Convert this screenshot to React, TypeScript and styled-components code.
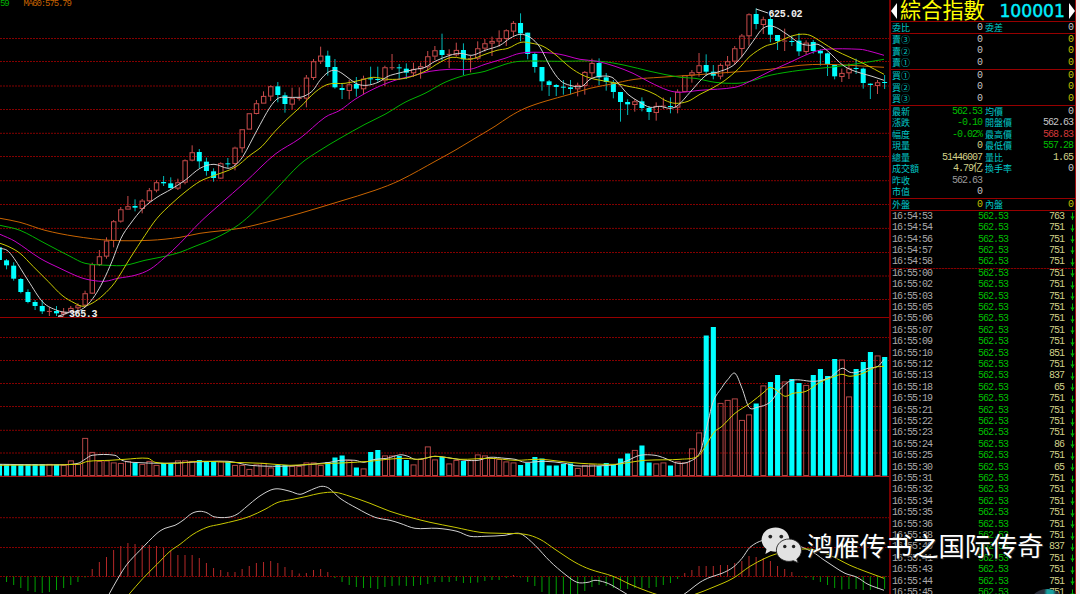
import React from "react";
import styled, { createGlobalStyle, css } from "styled-components";

/* ---------- data ---------- */

const FIRST_X = -0.6;
const STEP = 7.139;
const barX = (i: number) => FIRST_X + STEP * i;

// direction, high, body top, body bottom, low - vertical positions in thirds of a pixel
const CANDLES = `c742,742,780,780 c777,781,796,808 c787,797,836,842 c834,837,876,880 c868,876,906,910
c900,906,918,930 c900,918,934,942 r922,933,935,948 c918,933,940,948 r924,936,942,950
r918,924,934,940 r910,916,924,940 r872,880,916,922 r788,793,880,882 r750,769,794,798
r712,722,769,776 r660,664,722,742 r621,628,664,668 r588,619,628,628 c598,618,623,634
r597,602,626,640 r564,571,603,608 r541,547,571,577 c528,546,550,558 c532,550,564,566
r536,547,565,570 r478,481,547,553 r436,457,481,484 c447,456,484,504 c473,485,513,527
c505,514,534,545 r487,490,535,537 c474,490,493,503 r440,443,491,511 r388,388,444,458
r340,340,388,388 r300,310,341,343 r274,288,310,310 r256,259,289,303 c246,259,285,307
c277,286,312,338 r263,295,313,328 r262,294,297,302 r225,233,295,322 r177,184,233,240
r140,167,184,192 c152,167,201,227 c177,201,262,266 c252,264,270,297 r240,253,272,298
c231,252,266,290 r227,236,267,283 c200,235,237,252 c200,237,239,245 r197,202,241,258
r162,202,204,210 c192,202,205,240 c190,206,218,237 r188,207,219,231 r188,199,207,236
r153,169,201,213 r138,151,169,180 c101,150,165,182 r148,162,166,204 r128,150,165,170
c130,150,178,225 r168,175,178,217 r124,145,175,180 r117,130,145,155 r110,123,130,168
r91,115,124,140 r88,91,116,138 r63,69,94,108 c40,69,100,124 c98,98,162,178
c157,162,201,218 c201,201,244,272 c240,244,255,288 c252,255,261,288 c240,260,262,284
c240,262,267,283 r248,255,267,289 r213,216,257,284 r176,189,219,236 c175,189,232,256
c219,232,246,272 c240,247,276,295 c276,276,306,365 c298,306,313,345 r298,304,314,335
c292,304,324,334 c318,324,336,360 r307,318,338,362 r293,317,320,327 c292,318,321,340
r268,275,322,340 r226,226,275,276 r210,217,226,248 r159,196,218,230 c163,195,215,228
c195,215,227,238 r190,195,229,238 r168,184,196,220 r138,145,184,195 r102,107,146,172
r40,43,108,137 c25,42,72,88 r50,58,74,102 c48,57,104,127 c105,105,123,150
r86,122,125,153 c107,123,125,138 c99,122,154,168 r121,128,155,164 c120,126,153,161
c148,152,160,197 c158,160,192,228 c195,195,229,238 r206,219,230,246 r190,205,219,237
c176,204,206,222 c203,206,249,266 c250,251,255,297 r240,247,257,282 c225,246,248,267`
  .split(/\s+/)
  .map((s) => {
    const [high, top, bottom, low] = s.slice(1).split(",").map((n) => Number(n) / 3);
    return { up: s[0] === "r", high, top, bottom, low };
  });

const VOLUME_BASE = 475.7;
const VOLUMES = [
  464, 464, 464, 464, 464, 464, 464, 464, 464.5, 465, 460.5, 464, 438, 452, 461, 460.5, 462.5, 463, 461, 463,
  464, 461, 465, 463, 463, 460.5, 460.5, 461, 460, 461, 461, 461.5, 461.5, 465, 465, 469, 464.5, 463, 467.5, 465,
  465, 466, 466, 462.5, 462.5, 465, 462, 457.5, 455.5, 460, 467.5, 468.5, 452, 450, 455.5, 455.5, 456, 460, 464.5, 459,
  446.5, 459.5, 457, 463.5, 460, 461, 460, 454.5, 455.5, 458, 459, 461.5, 462.5, 465, 463, 457, 458.5, 465.5, 465.5, 464,
  463.5, 468, 465, 464.5, 466, 463, 465, 458.5, 453.5, 450, 445.5, 462.5, 463.5, 462.5, 465.5, 461.5, 462.5, 448.5, 432.5, 335.5,
  327, 403, 400, 398.5, 420, 414.5, 403.5, 385.5, 382, 375, 381.5, 379, 383, 385, 375, 369, 376, 359, 359.5, 396.5,
  369, 362, 352, 355.5, 357,
];

const ZERO_Y = 576.5;
const HISTOGRAM = [
  576.5, 582, 585, 588, 591, 592, 593, 592, 590, 588, 585, 582, 577.5, 569, 562, 557, 550, 546, 543, 544,
  545, 545, 546, 547.5, 551, 555, 555, 555, 558, 563, 568, 570, 572, 572, 569, 566, 563, 562, 561, 563,
  567, 570, 573.5, 573, 570, 569, 572, 578, 582, 585, 587, 588, 588, 589, 587, 586, 585.5, 586, 586, 585,
  584, 582, 582, 582, 581, 583, 583, 582.5, 581, 580, 580, 578, 575, 577.5, 582, 586, 592, 594, 594, 594,
  594, 594, 591, 587, 585, 586, 588, 589, 589, 588, 588, 588, 587, 585, 583, 579, 573, 570, 566, 566,
  566, 565, 565, 563, 561, 556, 557, 558, 561, 566, 569, 572, 577, 578, 580, 582, 585, 588, 589.5, 589,
  589, 590, 590, 589, 589,
];

const PRICE_LINES = [
  {
    color: "#c86400",
    points:
      "0,218 20,222 45,230 75,236 110,240 150,240 180,237 200,233 240,228 270,221 300,213 340,201 375,190 400,180 437,160 455,150 475,138 495,126 510,116 525,108 545,101 570,94 590,88 610,84 635,79 660,77 690,75 730,72 770,69 800,65 825,64 850,65 884,67",
  },
  {
    color: "#00b400",
    points:
      "0,225 20,230 45,243 70,256 85,263 108,265 125,265 145,260 165,256 180,252 195,246 215,238 235,227 250,215 275,190 300,164 320,150 340,138 365,124 385,114 405,102 425,93 445,82 465,75 485,71 505,64 520,61 560,61 600,61 625,65 650,71 680,77 695,78 715,82 737,83 750,81 770,75 800,70 830,67 860,63 884,59",
  },
  {
    color: "#c800c8",
    points:
      "0,234 15,241 40,258 60,268 80,277 92,280 105,281 118,278 135,275 150,269 165,257 180,243 200,222 220,204 245,182 275,154 300,138 325,117 340,110 355,99 375,88 395,80 415,75 430,71 450,69 470,69 485,64 505,58 520,53 540,52 560,54 580,59 597,61 615,66 633,73 650,82 668,90 680,92 700,90 735,87 750,81 770,71 790,62 810,53 825,49 860,49 870,51 884,55",
  },
  {
    color: "#c8c800",
    points:
      "0,243 8,246 20,253 33,266 48,281 62,295 75,303 83,306 92,303 103,295 115,282 130,258 145,235 157,218 172,203 186,191 200,181 212,176 235,167 250,155 262,146 275,131 288,118 300,107 315,92 328,84 345,83 360,80 373,77 388,79 405,78 425,71 440,62 452,57 470,59 485,54 497,50 508,48 521,42 532,43 543,46 555,54 570,67 583,75 595,79 612,82 628,86 643,89 655,94 665,100 675,103 688,101 700,94 712,88 725,80 738,69 750,56 765,46 775,43 788,37 800,34 810,35 822,42 835,50 850,57 865,64 884,74",
  },
  {
    color: "#d0d0d0",
    points:
      "0,248 7,250 14,258 28,280 43,302 57,310 67,312 77,311 86,306 95,295 103,281 112,261 121,238 130,224 143,208 157,197 171,189 185,180 200,168 214,164 228,168 235,165 243,156 257,130 270,107 278,98 285,97 300,97 306,95 313,90 320,80 328,72 335,70 342,73 350,79 358,84 367,85 378,82 388,76 398,73 415,69 425,67 435,61 450,55 460,53 472,55 485,50 500,45 510,38 520,34 530,37 540,47 550,66 560,80 570,85 582,86 590,79 600,76 612,77 620,85 628,94 640,102 650,107 660,106 670,108 678,105 690,92 706,75 717,72 732,66 742,56 753,41 763,28 773,26 787,34 800,43 810,45 818,44 828,51 843,65 855,71 872,76 884,80",
  },
];

const VOLUME_LINES = [
  {
    color: "#d4d4d4",
    points:
      "0,464 60,464.5 78,463 85,459 92,455 115,455 122,460 132,462 165,463 190,462 228,461 250,465 280,466 300,465 330,462 340,460 355,460 364,462 375,459 387,458 400,454.5 408,456 415,459 425,458 435,456 452,458 465,460 478,460 490,457 505,458 515,459 525,462 545,461 565,463 575,465.5 600,465.5 617,464 628,460 640,455 655,455 665,458 678,463 690,461 700,452 706,430 713,402 722,387 728,379 735,373 742,388 749,407 757,407 770,402 780,389 792,380 815,381 830,377 842,368 850,372 857,372 868,368 878,366 884,359",
  },
  {
    color: "#d4d400",
    points:
      "0,465 78,464 88,461 110,460 125,459 148,458 155,462 175,463 200,461 230,462 262,463 290,465 310,464 345,462.5 370,461 387,459 405,458 420,459 435,456 460,459 490,458 515,460 540,459 560,461 580,463 615,464 630,462 645,460 665,459.5 680,459 698,456 706,445 714,432 722,426 735,413 750,403 765,391 770,387 778,391 785,396 793,393 806,391 820,382 835,376 842,374 850,376 863,373 875,367 884,366",
  },
];

const MACD_LINES = [
  {
    color: "#d0d0d0",
    points:
      "109,594 118,578 127,564 140,550 157,533 165,528 175,525 183,520 192,513 200,511 207,512.5 214,516.5 228,517 237,514 247,506 258,497 270,490 278,488.5 290,491 300,494 308,491 315,488 322,486 329,488 340,498 357,508 375,517 390,520 400,523 415,528 437,528 457,531 470,536 485,536 505,535 515,533 522,534 535,545 550,561 565,574 577,582 588,582 595,580 605,582 612,585 627,594 640,602 670,602 684,594 700,582 710,577 722,573 733,567 742,558 750,547 763,540 778,540 792,543 813,552 823,559 835,567 845,573 857,577 868,584 884,590",
  },
  {
    color: "#c8c800",
    points:
      "129,594 143,578 157,564 170,551 180,544 193,534 207,527 220,524 237,520 250,516 265,509 278,502 293,499 307,496 320,493 335,492 350,496 370,503 390,511 410,517 430,522 455,527 480,532 500,533 525,534 540,539 555,549 575,562 590,569 613,576 630,584 645,590 660,595 680,598 695,594 713,587 733,578 750,566 765,558 775,554 790,550 812,549 830,555 850,565 865,571 884,578",
  },
];

const PRICE_GRID = [38.5, 61.5, 86, 109.5, 133.3, 156.5, 180.7, 204.5, 228.4, 252.5, 276, 299.5];
const VOLUME_GRID = [337.5, 360.5, 383.5, 406.5, 430.3, 453];
const MACD_GRID = [517.7, 547.5, 576.5];

const TICKS: [string, string][] = `54:53 763,54:54 751,54:56 751,54:57 751,54:58 751,55:00 751,55:02 751,55:03 751,55:05 751,55:06 751,55:07 751,55:09 751,55:10 851,55:12 751,55:13 837,55:18 65,55:19 751,55:21 751,55:22 751,55:23 751,55:24 86,55:25 751,55:30 65,55:31 751,55:32 751,55:34 751,55:35 751,55:36 751,55:38 751,55:40 837,55:41 751,55:43 751,55:44 751,55:45 751`
  .split(",")
  .map((s) => s.split(" ") as [string, string]);

const C = {
  label: "#00c8c8",
  white: "#c4c4c4",
  yellow: "#c0c000",
  pale: "#d0d088",
  green: "#00bc00",
  red: "#d03838",
  grey: "#989898",
};

type Quote = { h: number; l: string; v: string; vc: string; l2?: string; v2?: string; c2?: string };

const BLOCKS: Quote[][] = [
  [{ h: 11, l: "委比", v: "0", vc: C.white, l2: "委差", v2: "0", c2: C.white }],
  ["③", "②", "①"].map((n) => ({ h: 11.6, l: "賣" + n, v: "0", vc: C.white, v2: "0", c2: C.yellow })),
  ["①", "②", "③"].map((n) => ({ h: 11.6, l: "買" + n, v: "0", vc: C.white, v2: "0", c2: C.yellow })),
  [
    { h: 11.5, l: "最新", v: "562.53", vc: C.green, l2: "均價", v2: "0", c2: C.white },
    { h: 11.5, l: "漲跌", v: "-0.10", vc: C.green, l2: "開盤價", v2: "562.63", c2: C.white },
    { h: 11.5, l: "幅度", v: "-0.02%", vc: C.green, l2: "最高價", v2: "568.83", c2: C.red },
    { h: 11.5, l: "現量", v: "0", vc: C.pale, l2: "最低價", v2: "557.28", c2: C.green },
    { h: 11.5, l: "總量", v: "51446007", vc: C.pale, l2: "量比", v2: "1.65", c2: C.pale },
    { h: 11.5, l: "成交額", v: "4.79亿", vc: C.pale, l2: "換手率", v2: "0", c2: C.white },
    { h: 11.5, l: "昨收", v: "562.63", vc: C.grey },
    { h: 11.5, l: "市值", v: "0", vc: C.white },
  ],
  [{ h: 11, l: "外盤", v: "0", vc: C.yellow, l2: "內盤", v2: "0", c2: C.yellow }],
];
const BLOCK_HEIGHTS = [12, 36, 36, 93, 12];

/* ---------- styles ---------- */

const Global = createGlobalStyle`
  html, body { margin: 0; background: #000; overflow: hidden; }
`;

const mono = css`
  font-family: "Liberation Mono", "Noto Sans CJK TC", monospace;
  font-size: 10px;
  letter-spacing: -1px;
`;

const Screen = styled.div`
  position: relative;
  display: flex;
  width: 1080px;
  height: 594px;
  overflow: hidden;
  background: #000;
`;

const Charts = styled.main`
  position: relative;
  display: flex;
  flex-direction: column;
  width: 889px;
`;

const Pane = styled.section<{ $height: number; $line?: string }>`
  box-sizing: border-box;
  height: ${(p) => p.$height}px;
  border-bottom: ${(p) => (p.$line ? `1px solid ${p.$line}` : "none")};
  overflow: hidden;
  svg {
    display: block;
  }
`;

const Legend = styled.div`
  position: absolute;
  top: 0;
  left: 0;
  display: flex;
  gap: 15px;
  font: 9px/8px "Liberation Mono", monospace;
  letter-spacing: -1.1px;
`;

const LegendItem = styled.span<{ $color: string }>`
  color: ${(p) => p.$color};
`;

const Sidebar = styled.aside`
  box-sizing: border-box;
  display: flex;
  flex-direction: column;
  width: 187px;
  height: 594px;
  border-left: 2px solid #780000;
  border-right: 1px solid #a01010;
  overflow: hidden;
`;

const Title = styled.header`
  box-sizing: border-box;
  display: flex;
  flex: none;
  align-items: center;
  justify-content: space-between;
  height: 21px;
`;

const TitleName = styled.h1`
  margin: 0 0 0 3px;
  padding-bottom: 3px;
  font: 400 21.2px/18px "Noto Sans CJK TC", sans-serif;
  color: #ffff00;
  white-space: nowrap;
`;

const TitleCode = styled.span`
  margin: 0 4px 0 auto;
  padding-top: 1px;
  font: 400 17.2px/20px "DejaVu Sans", sans-serif;
  color: #00f0ff;
  -webkit-text-stroke: 0.4px #00f0ff;
`;

const Block = styled.div<{ $height: number }>`
  box-sizing: border-box;
  display: flex;
  flex-direction: column;
  justify-content: center;
  flex: none;
  height: ${(p) => p.$height}px;
  padding-bottom: 1px;
  border-top: 1px solid #960000;
`;

const QuoteRow = styled.div<{ $height: number }>`
  ${mono}
  display: grid;
  grid-template-columns: 38px 52px 40px 1fr;
  align-items: center;
  flex: none;
  height: ${(p) => p.$height}px;
  padding: 0 2px 0 1px;
  line-height: ${(p) => p.$height}px;
  white-space: nowrap;
`;

const Label = styled.span<{ $indent?: boolean }>`
  padding-left: ${(p) => (p.$indent ? 3 : 0)}px;
  font: 9px/11px "Noto Sans CJK TC", sans-serif;
  letter-spacing: 0;
  color: ${C.label};
`;

const Value = styled.span<{ $color: string }>`
  text-align: right;
  color: ${(p) => p.$color};
`;

const TickList = styled.div`
  flex: 1;
  min-height: 0;
  overflow: hidden;
  border-top: 1px solid #960000;
`;

const TickRow = styled.div<{ $marked: boolean }>`
  ${mono}
  box-sizing: border-box;
  display: grid;
  grid-template-columns: 84px 32px 1fr 11px;
  align-items: center;
  height: 11.42px;
  padding-left: 1px;
  line-height: 10px;
  background: ${(p) =>
    p.$marked ? "repeating-linear-gradient(90deg, #840000 0 2px, #300000 2px 3px) 0 0 / 100% 1px no-repeat" : "none"};
  svg {
    justify-self: end;
    margin-right: 0;
  }
`;

const TickTime = styled.time`
  color: #a8a8a8;
`;

const Edge = styled.div`
  flex: 1;
  background: #f0f0f0;
`;

const Watermark = styled.div`
  position: absolute;
  left: 761px;
  top: 527px;
  display: flex;
  align-items: center;
  gap: 5px;
  height: 36px;
  font: 400 26.3px/36px "Noto Sans CJK SC", sans-serif;
  color: #fff;
  text-shadow: 0 0 2px #000, 1px 1px 1px #333;
  white-space: nowrap;
`;

const Bubble = styled.div`
  position: absolute;
  left: 1028px;
  top: 589px;
  width: 38px;
  height: 38px;
  border-radius: 50%;
  background: radial-gradient(ellipse at 58% 9%, #18a0a0 0 3px, #2b303c 6px);
`;

/* ---------- parts ---------- */

type Line = { color: string; points: string };

function smooth(points: string) {
  const p = points.split(" ").map((s) => s.split(",").map(Number));
  let d = `M${p[0][0]},${p[0][1] + 0.3}`;
  for (let i = 0; i < p.length - 1; i++) {
    const a = p[Math.max(i - 1, 0)];
    const b = p[i];
    const c = p[i + 1];
    const e = p[Math.min(i + 2, p.length - 1)];
    const dx = (c[0] - b[0]) / 3;
    const slope = (u: number[], v: number[]) => (v[1] - u[1]) / (v[0] - u[0] || 1);
    d += `C${b[0] + dx},${b[1] + slope(a, c) * dx + 0.3} ${c[0] - dx},${c[1] - slope(b, e) * dx + 0.3} ${c[0]},${c[1] + 0.3}`;
  }
  return d;
}

const Lines = ({ items }: { items: Line[] }) => (
  <g fill="none" strokeWidth="1">
    {items.map((l) => (
      <path key={l.color} d={smooth(l.points)} stroke={l.color} />
    ))}
  </g>
);

const Grid = ({ rows }: { rows: number[] }) => (
  <g stroke="#840000" strokeWidth="1" strokeDasharray="2 1">
    {rows.map((y) => (
      <line key={y} x1="0" x2="889" y1={y} y2={y} />
    ))}
  </g>
);

const ChartSvg = ({ top, height, children }: { top: number; height: number; children: React.ReactNode }) => (
  <svg width="889" height={height} viewBox={`0 ${top} 889 ${height}`}>
    {children}
  </svg>
);

function Candles() {
  return (
    <g>
      {CANDLES.map((c, i) => {
        const x = barX(i);
        const h = c.bottom - c.top;
        return c.up ? (
          <g key={i} stroke="#c84b4b" fill="none">
            <path d={`M${x},${c.high}V${c.top}M${x},${c.bottom}V${c.low}`} />
            {h < 1.4 ? (
              <path d={`M${x - 2.5},${c.top + 0.4}h5`} />
            ) : (
              <rect x={x - 2.1} y={c.top + 0.4} width="4.4" height={Math.max(h - 0.6, 0.8)} />
            )}
          </g>
        ) : (
          <g key={i}>
            <path d={`M${x},${c.high}V${c.low}`} stroke="#00b8b8" />
            <rect x={x - 2.5} y={c.top} width="5" height={Math.max(h, 1)} fill="#00ffff" />
          </g>
        );
      })}
    </g>
  );
}

function VolumeBars() {
  return (
    <g>
      {VOLUMES.map((y, i) => {
        const x = barX(i);
        return CANDLES[i].up ? (
          <rect key={i} x={x - 2.4} y={y + 0.4} width="5" height={VOLUME_BASE - y - 0.6} fill="none" stroke="#b44646" />
        ) : (
          <rect key={i} x={x - 2.5} y={y} width="5.1" height={VOLUME_BASE - y} fill="#00ffff" />
        );
      })}
    </g>
  );
}

function Histogram() {
  return (
    <g strokeWidth="1">
      {HISTOGRAM.map((y, i) => (
        <path key={i} d={`M${barX(i)},${ZERO_Y}V${y}`} stroke={y < ZERO_Y ? "#b42828" : "#00a000"} />
      ))}
    </g>
  );
}

const CalloutText = styled.text`
  font: bold 10px "Liberation Mono", monospace;
  letter-spacing: -0.4px;
  fill: #f0f0f0;
`;

const Arrow = ({ left }: { left?: boolean }) => (
  <svg width="6" height="18" viewBox="0 0 6 18">
    <path d={left ? "M6,1V17L0,9Z" : "M0,1V17L6,9Z"} fill="#fff" />
  </svg>
);

const DownArrow = () => (
  <svg width="5" height="9" viewBox="0 0 5 9">
    <path d="M2.5,0.5V8" stroke="#00b000" />
    <path d="M0.4,4.6H4.6L2.5,7.6Z" fill="#00b000" />
  </svg>
);

const WeChat = () => (
  <svg width="41" height="36" viewBox="0 0 41 36">
    <path
      d="M14.5.6C6.7.6.6 6 .6 12.8c0 3.700 1.900 7 4.900 9.200L4.400 27l5.300-3c1.500.5 3.100.7 4.800.7 7.800 0 13.900-5.300 13.900-12S22.300.6 14.500.6Z"
      fill="#e2e2e2"
    />
    <path
      d="M28 12c-7 0-12.600 5-12.600 11.200S21 34.400 28 34.400c1.500 0 3-.3 4.300-.7l4.900 2.200-1.400-3.900c2.900-2 4.700-5.200 4.700-8.800C40.500 17 35 12 28 12Z"
      fill="#e2e2e2"
      stroke="#222"
      strokeWidth="0.9"
    />
    <g fill="#222">
      <circle cx="9.300" cy="9.600" r="1.900" />
      <circle cx="20.300" cy="9.600" r="1.900" />
      <circle cx="23.800" cy="19.500" r="1.700" />
      <circle cx="32.600" cy="19.500" r="1.700" />
    </g>
  </svg>
);

export default function App() {
  return (
    <Screen>
      <Global />
      <Charts>
        <Pane $height={318} $line="#960000">
          <ChartSvg top={0} height={317}>
            <Grid rows={PRICE_GRID} />
            <Candles />
            <Lines items={PRICE_LINES} />
            <path d="M756,9L768,13M58,316.300L69,312.500M58,316.300h5" stroke="#d0d0d0" fill="none" />
            <CalloutText x="768.5" y="16.5">625.02</CalloutText>
            <CalloutText x="69" y="316.8">365.3</CalloutText>
          </ChartSvg>
        </Pane>
        <Pane $height={159} $line="#b01414">
          <ChartSvg top={318} height={158}>
            <Grid rows={VOLUME_GRID} />
            <VolumeBars />
            <Lines items={VOLUME_LINES} />
          </ChartSvg>
        </Pane>
        <Pane $height={117}>
          <ChartSvg top={477} height={117}>
            <Grid rows={MACD_GRID} />
            <Histogram />
            <Lines items={MACD_LINES} />
          </ChartSvg>
        </Pane>
        <Legend>
          <LegendItem $color="#00b400">59</LegendItem>
          <LegendItem $color="#c86400">MA60:575.79</LegendItem>
        </Legend>
      </Charts>
      <Sidebar>
        <Title>
          <Arrow left />
          <TitleName>綜合指數</TitleName>
          <TitleCode>100001</TitleCode>
          <Arrow />
        </Title>
        {BLOCKS.map((rows, b) => (
          <Block key={b} $height={BLOCK_HEIGHTS[b]}>
            {rows.map((q) => (
              <QuoteRow key={q.l} $height={q.h}>
                <Label>{q.l}</Label>
                <Value $color={q.vc}>{q.v}</Value>
                <Label $indent>{q.l2}</Label>
                <Value $color={q.c2 ?? C.white}>{q.v2}</Value>
              </QuoteRow>
            ))}
          </Block>
        ))}
        <TickList>
          {TICKS.map(([time, vol], i) => (
            <TickRow key={time} $marked={i === 5}>
              <TickTime>16:{time}</TickTime>
              <Value $color={C.green}>562.53</Value>
              <Value $color={C.pale}>{vol}</Value>
              <DownArrow />
            </TickRow>
          ))}
        </TickList>
      </Sidebar>
      <Edge />
      <Bubble />
      <Watermark>
        <WeChat />
        鸿雁传书之国际传奇
      </Watermark>
    </Screen>
  );
}
